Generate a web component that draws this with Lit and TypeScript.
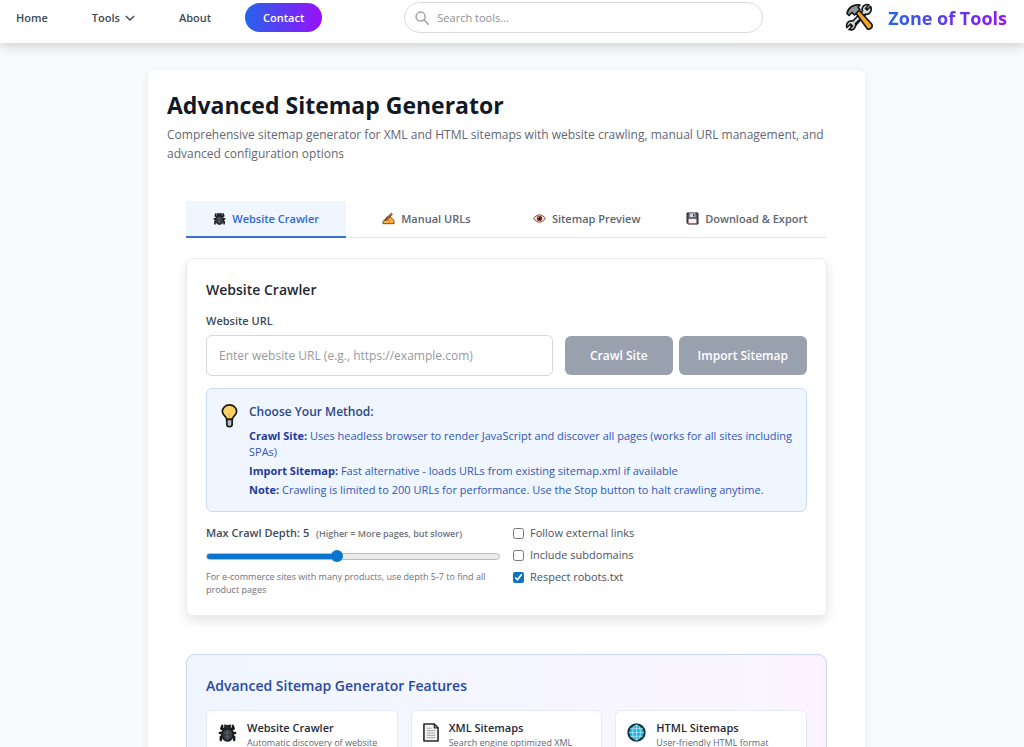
import { LitElement, html, css, svg } from "lit";
import { customElement, state } from "lit/decorators.js";
import { classMap } from "lit/directives/class-map.js";

const bug = svg`
  <g stroke="#17191c" stroke-width="2.600" fill="none" stroke-linejoin="round" stroke-linecap="round">
    <path d="M7 7 3.500 6 4.500 3M13 7l3.500-1L15.500 3M6 10.500 2 10.500M14 10.500h4M6 13l-3 1.500V18M14 13l3 1.500V18"/>
  </g>
  <ellipse cx="10" cy="12" rx="6" ry="7" fill="#373c42" stroke="#17191c" stroke-width="1.600"/>
  <path d="M6 6.500C6 1 14 1 14 6.500Z" fill="#25282c" stroke="#17191c"/>
  <path d="M7 1.500 8 4M13 1.500 12 4" stroke="#17191c" stroke-width="1.600"/>
  <path d="M10 7.500v10M6.500 10.500h7M7.500 14h5" stroke="#60676f" stroke-width=".9"/>`;

const writing = svg`
  <path d="M1.500 18V14.500L5 11l3.500-4 3 1.500 3 .5 4 4.500V18Z" fill="#fcb73a" stroke="#6b3a16" stroke-width="1.400" stroke-linejoin="round"/>
  <path d="M4 13.500 11 5 14.500 2l1.500 1.500L8.500 12Z" fill="#e9662f" stroke="#4c2c18" stroke-width="1.200" stroke-linejoin="round"/>
  <path d="M9 13h5M9 15.500h4" stroke="#d98015" stroke-width="1.100"/>`;

const eye = svg`
  <path d="M1 10Q10-1.500 19 10 10 21.500 1 10Z" fill="#fff" stroke="#9a6550" stroke-width="1.600"/>
  <circle cx="10" cy="10" r="4.300" fill="#8c3d26"/>
  <circle cx="10" cy="10" r="2.300" fill="#150c0a"/>
  <circle cx="8.800" cy="8.600" r=".8" fill="#fff"/>`;

const floppy = svg`
  <path d="M1.500 1.500h17v17h-15l-2-2Z" fill="#56545d" stroke="#25232a" stroke-width="1.500"/>
  <path d="M5.500 2h9v6h-9Z" fill="#cfd3d9"/>
  <path d="M11 3h2v4h-2Z" fill="#34323a"/>
  <path d="M4 10.500h12v7.500H4Z" fill="#fbeef0"/>
  <path d="M4 18h12" stroke="#b5455a" stroke-width="1.500"/>`;

const bulb = svg`
  <path d="M7 16C7 12.500 2.500 12 2.500 7.800A7.500 7 0 0 1 17.500 7.800C17.500 12 13 12.500 13 16Z" fill="#fdd264" stroke="#1c1a16" stroke-width="1.800"/>
  <path d="M7.200 16h5.600v5.500a2.800 2.300 0 0 1-5.600 0Z" fill="#b9bec5" stroke="#1c1a16" stroke-width="1.800"/>
  <path d="M10 10v5" stroke="#f3b63b" stroke-width="1.200"/>`;

const paper = svg`
  <path d="M1 1h11l4 4v14H1Z" fill="#f4f4f4" stroke="#26282b" stroke-width="1.700" stroke-linejoin="round"/>
  <path d="M12 1v4h4" fill="none" stroke="#26282b" stroke-width="1.300"/>
  <path d="M4 5.500h5M4 8h9M4 10.500h9M4 13h9M4 15.500h9" stroke="#9a9da2" stroke-width="1"/>`;

const globe = svg`
  <circle cx="10" cy="10" r="8.600" fill="#1fb4dc" stroke="#12323f" stroke-width="2.200"/>
  <path d="M10 2v16M2 10h16M3.500 6h13M3.500 14h13" stroke="#a5e4f3" stroke-width=".9"/>
  <ellipse cx="10" cy="10" rx="4.200" ry="8" fill="none" stroke="#a5e4f3" stroke-width=".9"/>`;

const toolsLogo = svg`
  <g stroke-linecap="round" stroke-linejoin="round">
    <path d="M8 22 21 8" stroke="#17181a" stroke-width="6"/>
    <path d="M25.500 3.500 22 7l-1.500-1.500L24 2c-4-1.500-8 2-6.500 6L8 18c-4-1-7.500 2.500-6 6.500L5.500 21l2 2L4 26.500c4 1.500 7.500-2 6.500-6L20.500 11c4 1.500 7-3.500 5-7.500Z" fill="#d9dee3" stroke="#17181a" stroke-width="1.700"/>
    <path d="M10.500 9.500 13.500 6.500 27 21.500c1 2.500-2 5.500-4.500 4.500Z" fill="#f5a72a" stroke="#17181a" stroke-width="1.700"/>
    <path d="M2 10.500C3 5 8 1 15 2l-2 2.500 2 2L9.500 12 7 9.500l-3 3Z" fill="#8f969d" stroke="#17181a" stroke-width="1.700"/>
  </g>`;

type Glyph = ReturnType<typeof svg>;

const icon = (glyph: Glyph, cls: string, box = "0 0 20 20") =>
  html`<svg class=${cls} viewBox=${box} aria-hidden="true">${glyph}</svg>`;

@customElement("app-header")
class AppHeader extends LitElement {
  static styles = css`
    :host { display: block; position: relative; z-index: 1; }
    .bar {
      display: flex; align-items: center; justify-content: space-between;
      height: 43px; padding: 0 17px 8px 16px; box-sizing: border-box;
      background: #fff; box-shadow: 0 3px 12px rgba(0, 0, 0, .18);
    }
    .nav { display: flex; align-items: center; gap: 44px; font-size: 11px; font-weight: 600; }
    .link, .menu { color: #414958; text-decoration: none; font: inherit; line-height: 16px; }
    .menu { display: flex; align-items: center; gap: 5px; padding: 0; border: 0; background: none; }
    .chevron { width: 10px; height: 10px; fill: none; stroke: currentColor; stroke-width: 1.600; }
    .about { display: flex; align-items: center; gap: 34px; }
    .contact {
      padding: 6px 18px; border-radius: 16px; color: #fff; line-height: 17px;
      text-decoration: none; background: linear-gradient(90deg, #2563eb, #9810fa);
    }
    .search {
      display: flex; align-items: center; gap: 8px; flex: 0 1 359px; height: 31px;
      padding: 0 10px; box-sizing: border-box; border: 1px solid #d9dbdf; border-radius: 16px;
    }
    .lens { width: 14px; height: 14px; flex: none; fill: none; stroke: #9a9da3; stroke-width: 2; stroke-linecap: round; }
    .field { flex: 1; min-width: 0; padding: 0; border: 0; outline: 0; background: none; font: 11px/16px "Open Sans", sans-serif; }
    .field::placeholder { color: #8d9094; }
    .brand { display: flex; align-items: center; gap: 14px; text-decoration: none; }
    .logo { width: 29px; height: 29px; }
    .name {
      font-size: 18px; font-weight: 700; line-height: 26px; color: transparent;
      background: linear-gradient(90deg, #2563eb, #9810fa); background-clip: text; -webkit-background-clip: text;
    }
  `;

  render() {
    return html`
      <header class="bar">
        <nav class="nav">
          <a class="link" href="#home">Home</a>
          <button class="menu" type="button">Tools
            <svg class="chevron" viewBox="0 0 12 12" aria-hidden="true"><path d="m1 3.500 5 5 5-5"/></svg>
          </button>
          <div class="about">
            <a class="link" href="#about">About</a>
            <a class="contact" href="#contact">Contact</a>
          </div>
        </nav>
        <label class="search">
          <svg class="lens" viewBox="0 0 20 20" aria-hidden="true"><circle cx="8" cy="8" r="6.500"/><path d="m13 13 6 6"/></svg>
          <input class="field" type="search" placeholder="Search tools..." aria-label="Search tools" />
        </label>
        <a class="brand" href="#home">
          ${icon(toolsLogo, "logo", "0 0 29 29")}
          <span class="name">Zone of Tools</span>
        </a>
      </header>
    `;
  }
}

const TABS: { label: string; glyph: Glyph }[] = [
  { label: "Website Crawler", glyph: bug },
  { label: "Manual URLs", glyph: writing },
  { label: "Sitemap Preview", glyph: eye },
  { label: "Download & Export", glyph: floppy },
];

const FEATURES: { title: string; text: string; glyph: Glyph; narrow?: boolean }[] = [
  { title: "Website Crawler", text: "Automatic discovery of website", glyph: bug },
  { title: "XML Sitemaps", text: "Search engine optimized XML", glyph: paper, narrow: true },
  { title: "HTML Sitemaps", text: "User-friendly HTML format", glyph: globe },
];

@customElement("app-root")
class AppRoot extends LitElement {
  @state() private tab = 0;
  @state() private depth = 5;

  static styles = css`
    :host {
      display: block; min-height: 100vh; background: #f9fafb; color: #374151;
      font-family: "Open Sans", "Noto Sans", sans-serif; font-size: 11px; line-height: 16px;
    }
    h1, h2, h3, p { margin: 0; }
    .page { padding: 27px 11px 0 0; }
    .card {
      max-width: 717px; margin: 0 auto; padding: 19px 19px 24px; box-sizing: border-box;
      background: #fff; border-radius: 6px; box-shadow: 0 1px 8px rgba(0, 0, 0, .07);
    }
    .title { font-size: 23px; line-height: 32px; font-weight: 700; color: #111827; }
    .lead { margin-top: 4px; font-size: 12px; line-height: 19px; color: #5f6875; }
    .body { padding: 38px 19px 0; }
    .tabs { display: grid; grid-template-columns: repeat(4, 1fr); border-bottom: 1px solid #e5e7eb; }
    .tab {
      display: flex; align-items: center; justify-content: center; gap: 6px;
      height: 37px; padding: 0; margin: 0 0 -1px; border: 0; border-bottom: 2px solid transparent;
      background: none; color: #5d6571; font: 600 11px/16px "Open Sans", sans-serif;
    }
    .tab.active { background: #eff6ff; border-color: #3d71c9; color: #2f66d8; }
    .tab-icon { width: 13px; height: 13px; }
    .panel {
      margin-top: 20px; padding: 20px 19px 19px; border: 1px solid #eaecef; border-radius: 7px;
      box-shadow: 0 5px 12px rgba(0, 0, 0, .11);
    }
    .panel-title { font-size: 14px; line-height: 22px; font-weight: 600; color: #1f2937; }
    .label { display: block; font-weight: 600; color: #414a5a; }
    .url-label { margin: 12px 0 6px; }
    .row { display: flex; align-items: center; gap: 6px; }
    .url {
      flex: 1; min-width: 0; height: 41px; margin-right: 6px; padding: 0 12px; box-sizing: border-box;
      border: 1px solid #d5d8dd; border-radius: 6px; font: 12px/20px "Open Sans", sans-serif;
    }
    .url::placeholder { color: #96999e; }
    .action {
      height: 39px; padding: 0 19px; border: 0; border-radius: 6px; background: #99a1af;
      color: #fff; font: 600 12px/20px "Open Sans", sans-serif;
    }
    .crawl { padding: 0 25px; }
    .note {
      display: flex; align-items: flex-start; gap: 10px; margin: 12px 0 13px; padding: 13px;
      border: 1px solid #c9dcf7; border-radius: 6px; background: #eff6ff;
    }
    .bulb { flex: none; width: 19px; height: 25px; margin-top: 2px; }
    .note-title { margin-bottom: 6px; font-size: 12px; line-height: 20px; font-weight: 600; color: #2c4788; }
    .note-text { color: #3157b4; }
    .note-text + .note-text { margin-top: 3px; }
    .strong { font-weight: 700; color: #1e3a9c; }
    .options { display: grid; grid-template-columns: 1fr 1fr; gap: 13px; }
    .aside { margin-left: 4px; font-size: 9px; color: #6b7280; }
    .range {
      display: block; appearance: none; width: 100%; height: 16px; margin: 6px 0; background: none;
      --fill: 44%;
    }
    .range::-webkit-slider-runnable-track {
      height: 7px; box-sizing: border-box; border: 1px solid #b9bbbe; border-radius: 4px;
      background: linear-gradient(90deg, #0b74cf var(--fill), #ececec var(--fill)) border-box;
    }
    .range::-webkit-slider-thumb {
      appearance: none; width: 12px; height: 12px; margin-top: -4px; border-radius: 50%; background: #0b74cf;
    }
    .hint { font-size: 9px; line-height: 13px; color: #6b7280; }
    .checks { display: flex; flex-direction: column; gap: 6px; }
    .check { display: flex; align-items: center; gap: 6px; color: #4b5260; }
    .box { width: 11px; height: 11px; margin: 0; accent-color: #0f73c4; }
    .features {
      margin-top: 38px; padding: 19px 19px 20px; border: 1px solid #c9d6ee; border-radius: 9px;
      background: linear-gradient(90deg, #eff6ff, #faf5ff 90%, #fbf2ff);
    }
    .features-title { margin-bottom: 12px; font-size: 14px; line-height: 24px; font-weight: 600; color: #2b489f; }
    .grid { display: grid; grid-template-columns: repeat(3, minmax(0, 1fr)); gap: 13px; }
    .feature {
      display: flex; gap: 10px; padding: 9px 11px 11px; border: 1px solid #e4eaf6; border-radius: 6px; background: #fff;
    }
    .feature-icon { flex: none; width: 19px; height: 19px; margin-top: 3px; }
    .feature-icon.narrow { width: 16px; }
    .feature-title { font-size: 11px; line-height: 16px; font-weight: 600; color: #1f2937; }
    .feature-text { font-size: 9px; line-height: 13px; color: #5f6875; }
  `;

  render() {
    const fill = ((this.depth - 1) / 9) * 100;
    return html`
      <app-header></app-header>
      <main class="page">
        <section class="card">
          <h1 class="title">Advanced Sitemap Generator</h1>
          <p class="lead">Comprehensive sitemap generator for XML and HTML sitemaps with website crawling, manual URL management, and advanced configuration options</p>
          <div class="body">
            <div class="tabs" role="tablist">
              ${TABS.map((t, i) => html`
                <button type="button" role="tab" aria-selected=${this.tab === i}
                  class=${classMap({ tab: true, active: this.tab === i })}
                  @click=${() => (this.tab = i)}>${icon(t.glyph, "tab-icon")}${t.label}</button>`)}
            </div>
            <section class="panel">
              <h2 class="panel-title">Website Crawler</h2>
              <label class="label url-label" for="url">Website URL</label>
              <div class="row">
                <input class="url" id="url" type="url" placeholder="Enter website URL (e.g., https://example.com)" />
                <button class="action crawl" type="button">Crawl Site</button>
                <button class="action" type="button">Import Sitemap</button>
              </div>
              <div class="note">
                ${icon(bulb, "bulb", "0 0 20 26")}
                <div>
                  <h3 class="note-title">Choose Your Method:</h3>
                  <p class="note-text"><strong class="strong">Crawl Site:</strong> Uses headless browser to render JavaScript and discover all pages (works for all sites including SPAs)</p>
                  <p class="note-text"><strong class="strong">Import Sitemap:</strong> Fast alternative - loads URLs from existing sitemap.xml if available</p>
                  <p class="note-text"><strong class="strong">Note:</strong> Crawling is limited to 200 URLs for performance. Use the Stop button to halt crawling anytime.</p>
                </div>
              </div>
              <div class="options">
                <div>
                  <label class="label" for="depth">Max Crawl Depth: ${this.depth} <span class="aside">(Higher = More pages, but slower)</span></label>
                  <input class="range" id="depth" type="range" min="1" max="10" .value=${String(this.depth)}
                    style="--fill: ${fill}%"
                    @input=${(e: Event) => (this.depth = Number((e.target as HTMLInputElement).value))} />
                  <p class="hint">For e-commerce sites with many products, use depth 5-7 to find all product pages</p>
                </div>
                <div class="checks">
                  <label class="check"><input class="box" type="checkbox" />Follow external links</label>
                  <label class="check"><input class="box" type="checkbox" />Include subdomains</label>
                  <label class="check"><input class="box" type="checkbox" checked />Respect robots.txt</label>
                </div>
              </div>
            </section>
            <section class="features">
              <h2 class="features-title">Advanced Sitemap Generator Features</h2>
              <div class="grid">
                ${FEATURES.map((f) => html`
                  <article class="feature">
                    ${icon(f.glyph, f.narrow ? "feature-icon narrow" : "feature-icon", f.narrow ? "0 0 17 20" : "0 0 20 20")}
                    <div>
                      <h3 class="feature-title">${f.title}</h3>
                      <p class="feature-text">${f.text}</p>
                    </div>
                  </article>`)}
              </div>
            </section>
          </div>
        </section>
      </main>
    `;
  }
}
